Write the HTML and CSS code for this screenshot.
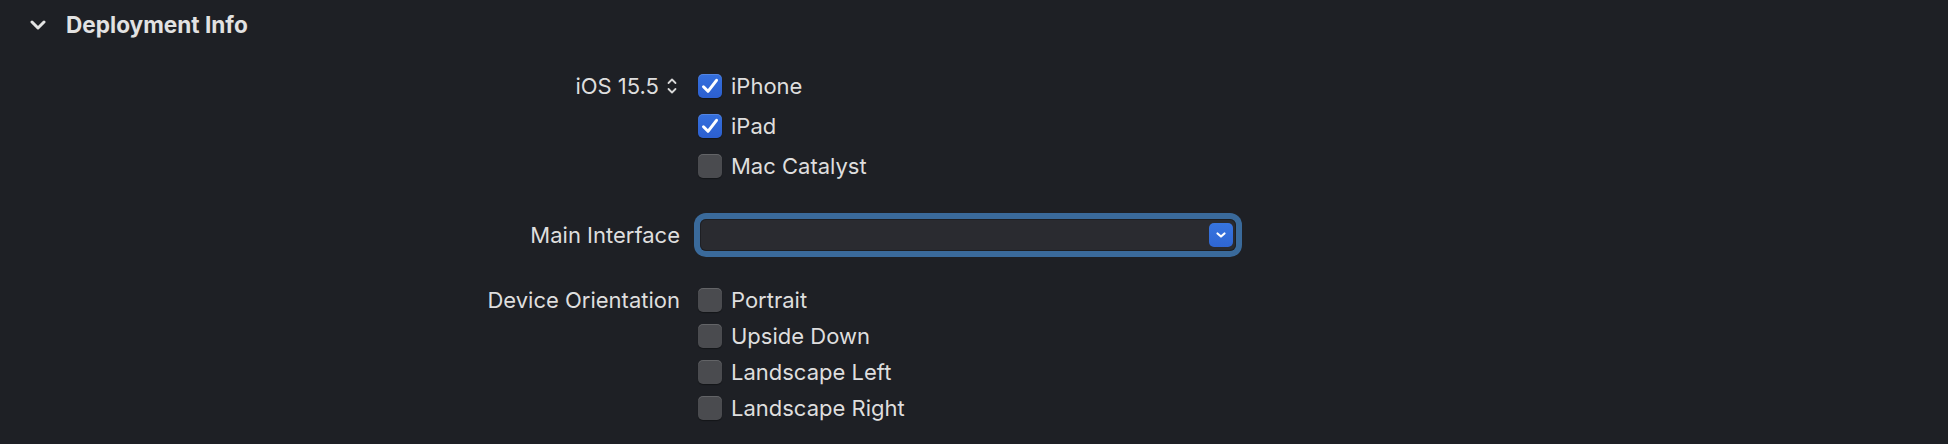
FILE: index.html
```html
<!DOCTYPE html>
<html>
<head>
<meta charset="utf-8">
<link rel="stylesheet" href="styles.css">
</head>
<body>
<div class="panel">
  <div class="section-header">
    <svg class="disclosure" width="16" height="10" viewBox="0 0 16 10"><path d="M2 2 L8 8 L14 2" fill="none" stroke="#e4e4e4" stroke-width="3" stroke-linecap="round" stroke-linejoin="round"/></svg>
    <span class="section-title">Deployment Info</span>
  </div>

  <div class="field field-targets">
    <div class="label">iOS 15.5
      <svg class="updown" width="10" height="16" viewBox="0 0 10 16"><path d="M1.5 5 L5 1.5 L8.5 5 M1.5 11 L5 14.5 L8.5 11" fill="none" stroke="#d8d8d8" stroke-width="1.8" stroke-linecap="round" stroke-linejoin="round"/></svg>
    </div>
    <div class="controls list-wide">
      <div class="check-row"><span class="box checked"><svg width="24" height="24" viewBox="0 0 24 24"><path d="M5.5 12.8 L10 17.3 L18.5 6.3" fill="none" stroke="#fff" stroke-width="3" stroke-linecap="round" stroke-linejoin="round"/></svg></span><span class="text">iPhone</span></div>
      <div class="check-row"><span class="box checked"><svg width="24" height="24" viewBox="0 0 24 24"><path d="M5.5 12.8 L10 17.3 L18.5 6.3" fill="none" stroke="#fff" stroke-width="3" stroke-linecap="round" stroke-linejoin="round"/></svg></span><span class="text">iPad</span></div>
      <div class="check-row"><span class="box"></span><span class="text">Mac Catalyst</span></div>
    </div>
  </div>

  <div class="field field-interface">
    <div class="label label-combo">Main Interface</div>
    <div class="controls">
      <div class="combo">
        <div class="combo-field">
          <span class="combo-button"><svg width="12" height="8" viewBox="0 0 12 8"><path d="M2.5 2.5 L6 5.5 L9.5 2.5" fill="none" stroke="#fff" stroke-width="2.2" stroke-linecap="round" stroke-linejoin="round"/></svg></span>
        </div>
      </div>
    </div>
  </div>

  <div class="field field-orientation">
    <div class="label">Device Orientation</div>
    <div class="controls list-tight">
      <div class="check-row"><span class="box"></span><span class="text">Portrait</span></div>
      <div class="check-row"><span class="box"></span><span class="text">Upside Down</span></div>
      <div class="check-row"><span class="box"></span><span class="text">Landscape Left</span></div>
      <div class="check-row"><span class="box"></span><span class="text">Landscape Right</span></div>
    </div>
  </div>
</div>
</body>
</html>
```

FILE: styles.css
```css
html, body {
  margin: 0;
  padding: 0;
  background: #1e2025;
}

body {
  width: 1948px;
  height: 444px;
  overflow: hidden;
  font-family: Inter, "Liberation Sans", sans-serif;
  font-size: 22px;
  color: #dedede;
}

.panel {
  padding-top: 12px;
}

.section-header {
  display: flex;
  align-items: center;
  height: 26px;
  padding-left: 30px;
}

.disclosure {
  display: block;
  margin-right: 20px;
  margin-top: -1px;
}

.section-title {
  font-weight: 700;
  font-size: 22.6px;
  line-height: 26px;
  color: #e2e2e2;
}

.field {
  display: grid;
  grid-template-columns: 680px auto;
  column-gap: 18px;
  align-items: start;
}

.field-targets {
  margin-top: 36px;
}

.field-interface {
  margin-top: 35px;
}

.field-orientation {
  margin-top: 31px;
}

.label {
  text-align: right;
  line-height: 24px;
  height: 24px;
  display: flex;
  justify-content: flex-end;
  align-items: center;
  white-space: nowrap;
}

.label-combo {
  height: 44px;
  line-height: 44px;
}

.updown {
  display: block;
  margin-left: 8px;
  margin-right: 3px;
}

.controls {
  display: flex;
  flex-direction: column;
  align-items: flex-start;
}

.list-wide {
  gap: 16px;
}

.list-tight {
  gap: 12px;
}

.check-row {
  display: flex;
  align-items: center;
  height: 24px;
  gap: 9px;
}

.text {
  line-height: 24px;
  white-space: nowrap;
}

.box {
  width: 24px;
  height: 24px;
  border-radius: 5px;
  background: #4a4b4f;
  box-shadow: inset 0 1px 0 rgba(255, 255, 255, 0.14), 0 1px 1px rgba(0, 0, 0, 0.35);
  box-sizing: border-box;
  display: block;
}

.box.checked {
  background: linear-gradient(#3570de, #2c5fcf);
  box-shadow: inset 0 1px 0 rgba(255, 255, 255, 0.15), 0 1px 1px rgba(0, 0, 0, 0.35);
}

.box svg {
  display: block;
}

.combo {
  width: 548px;
  height: 44px;
  box-sizing: border-box;
  padding: 6px;
  border-radius: 12px;
  background: #3a6a9b;
  margin-left: -4px;
}

.combo-field {
  height: 32px;
  border-radius: 6px;
  background: #2a2b30;
  box-shadow: inset 0 0 0 1px rgba(20, 22, 26, 0.55);
  display: flex;
  justify-content: flex-end;
  align-items: center;
  padding-right: 3px;
}

.combo-button {
  width: 24px;
  height: 24px;
  border-radius: 5px;
  background: linear-gradient(#3775e0, #2f66d3);
  display: flex;
  align-items: center;
  justify-content: center;
}

.combo-button svg {
  display: block;
}
```
